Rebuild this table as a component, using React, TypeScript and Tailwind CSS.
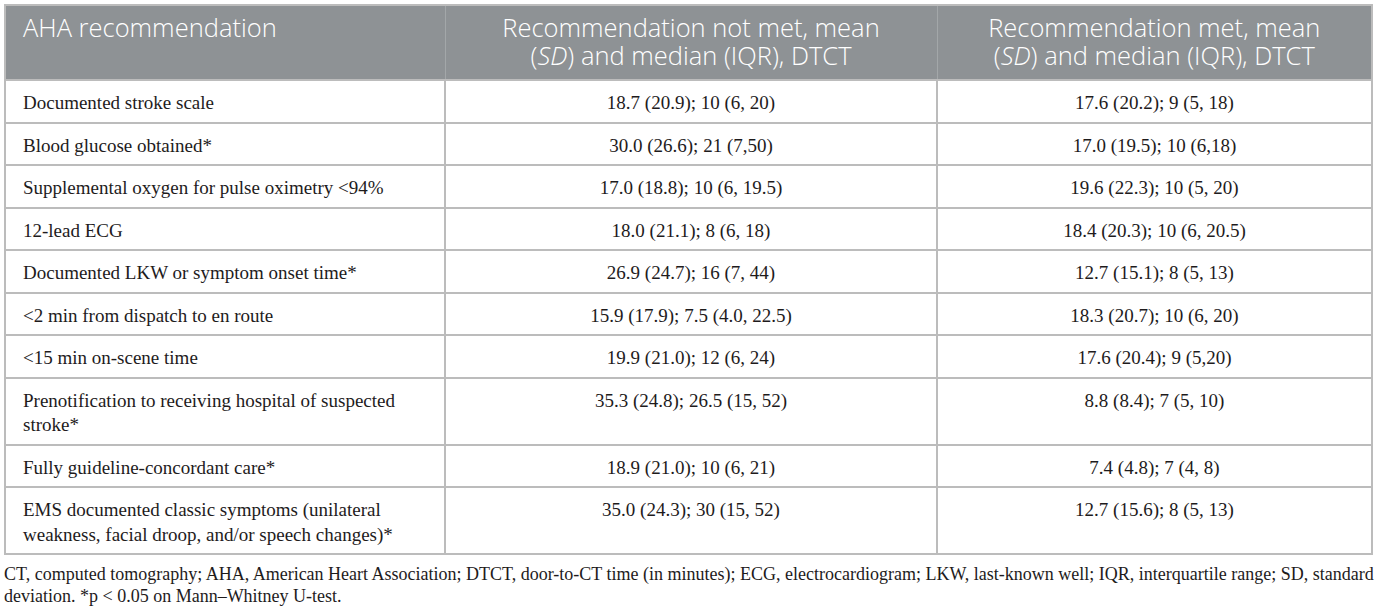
import React from 'react';

interface Row {
  label: React.ReactNode;
  notMet: string;
  met: string;
}

const rows: Row[] = [
  { label: 'Documented stroke scale', notMet: '18.7 (20.9); 10 (6, 20)', met: '17.6 (20.2); 9 (5, 18)' },
  { label: 'Blood glucose obtained*', notMet: '30.0 (26.6); 21 (7,50)', met: '17.0 (19.5); 10 (6,18)' },
  { label: 'Supplemental oxygen for pulse oximetry <94%', notMet: '17.0 (18.8); 10 (6, 19.5)', met: '19.6 (22.3); 10 (5, 20)' },
  { label: '12-lead ECG', notMet: '18.0 (21.1); 8 (6, 18)', met: '18.4 (20.3); 10 (6, 20.5)' },
  { label: 'Documented LKW or symptom onset time*', notMet: '26.9 (24.7); 16 (7, 44)', met: '12.7 (15.1); 8 (5, 13)' },
  { label: '<2 min from dispatch to en route', notMet: '15.9 (17.9); 7.5 (4.0, 22.5)', met: '18.3 (20.7); 10 (6, 20)' },
  { label: '<15 min on-scene time', notMet: '19.9 (21.0); 12 (6, 24)', met: '17.6 (20.4); 9 (5,20)' },
  {
    label: (
      <>
        Prenotification to receiving hospital of suspected
        <br />
        stroke*
      </>
    ),
    notMet: '35.3 (24.8); 26.5 (15, 52)',
    met: '8.8 (8.4); 7 (5, 10)',
  },
  { label: 'Fully guideline-concordant care*', notMet: '18.9 (21.0); 10 (6, 21)', met: '7.4 (4.8); 7 (4, 8)' },
  {
    label: (
      <>
        EMS documented classic symptoms (unilateral
        <br />
        weakness, facial droop, and/or speech changes)*
      </>
    ),
    notMet: '35.0 (24.3); 30 (15, 52)',
    met: '12.7 (15.6); 8 (5, 13)',
  },
];

export default function App() {
  return (
    <div className="bg-white w-[1375px] h-[612px] pl-[4px] pt-[4px] font-['Liberation_Serif',serif] text-[#1e1b1c]">
      <table className="w-[1367px] border-collapse border-2 border-[#bcbcbc] table-fixed">
        <colgroup>
          <col className="w-[440px]" />
          <col className="w-[492px]" />
          <col className="w-[435px]" />
        </colgroup>
        <thead>
          <tr className="bg-[#8e9295] text-white font-['Open_Sans',sans-serif] text-[25.5px] leading-[28px]">
            <th className="text-left align-top pl-[17px] pt-[7px] pb-[10px] font-light border-r border-[#a3a7a9]">
              AHA recommendation
            </th>
            <th className="text-center align-top pt-[7px] pb-[10px] font-light border-r border-[#a3a7a9]">
              Recommendation not met, mean
              <br />
              (<i>SD</i>) and median (IQR), DTCT
            </th>
            <th className="text-center align-top pt-[7px] pb-[10px] font-light">
              Recommendation met, mean
              <br />
              (<i>SD</i>) and median (IQR), DTCT
            </th>
          </tr>
        </thead>
        <tbody className="text-[19px] leading-[24.5px]">
          {rows.map((row, i) => (
            <tr key={i} className="border-t-2 border-[#bcbcbc]">
              <td className="align-top pl-[17px] pt-[10px] pb-[6px] border-r-2 border-[#bcbcbc]">{row.label}</td>
              <td className="align-top text-center pt-[10px] pb-[6px] border-r-2 border-[#bcbcbc]">{row.notMet}</td>
              <td className="align-top text-center pt-[10px] pb-[6px]">{row.met}</td>
            </tr>
          ))}
        </tbody>
      </table>
      <p className="text-[18px] leading-[22px] mt-[8px]">
        CT, computed tomography; AHA, American Heart Association; DTCT, door-to-CT time (in minutes); ECG, electrocardiogram; LKW, last-known well; IQR, interquartile range; SD, standard
        <br />
        deviation. *p &lt; 0.05 on Mann–Whitney U-test.
      </p>
    </div>
  );
}
